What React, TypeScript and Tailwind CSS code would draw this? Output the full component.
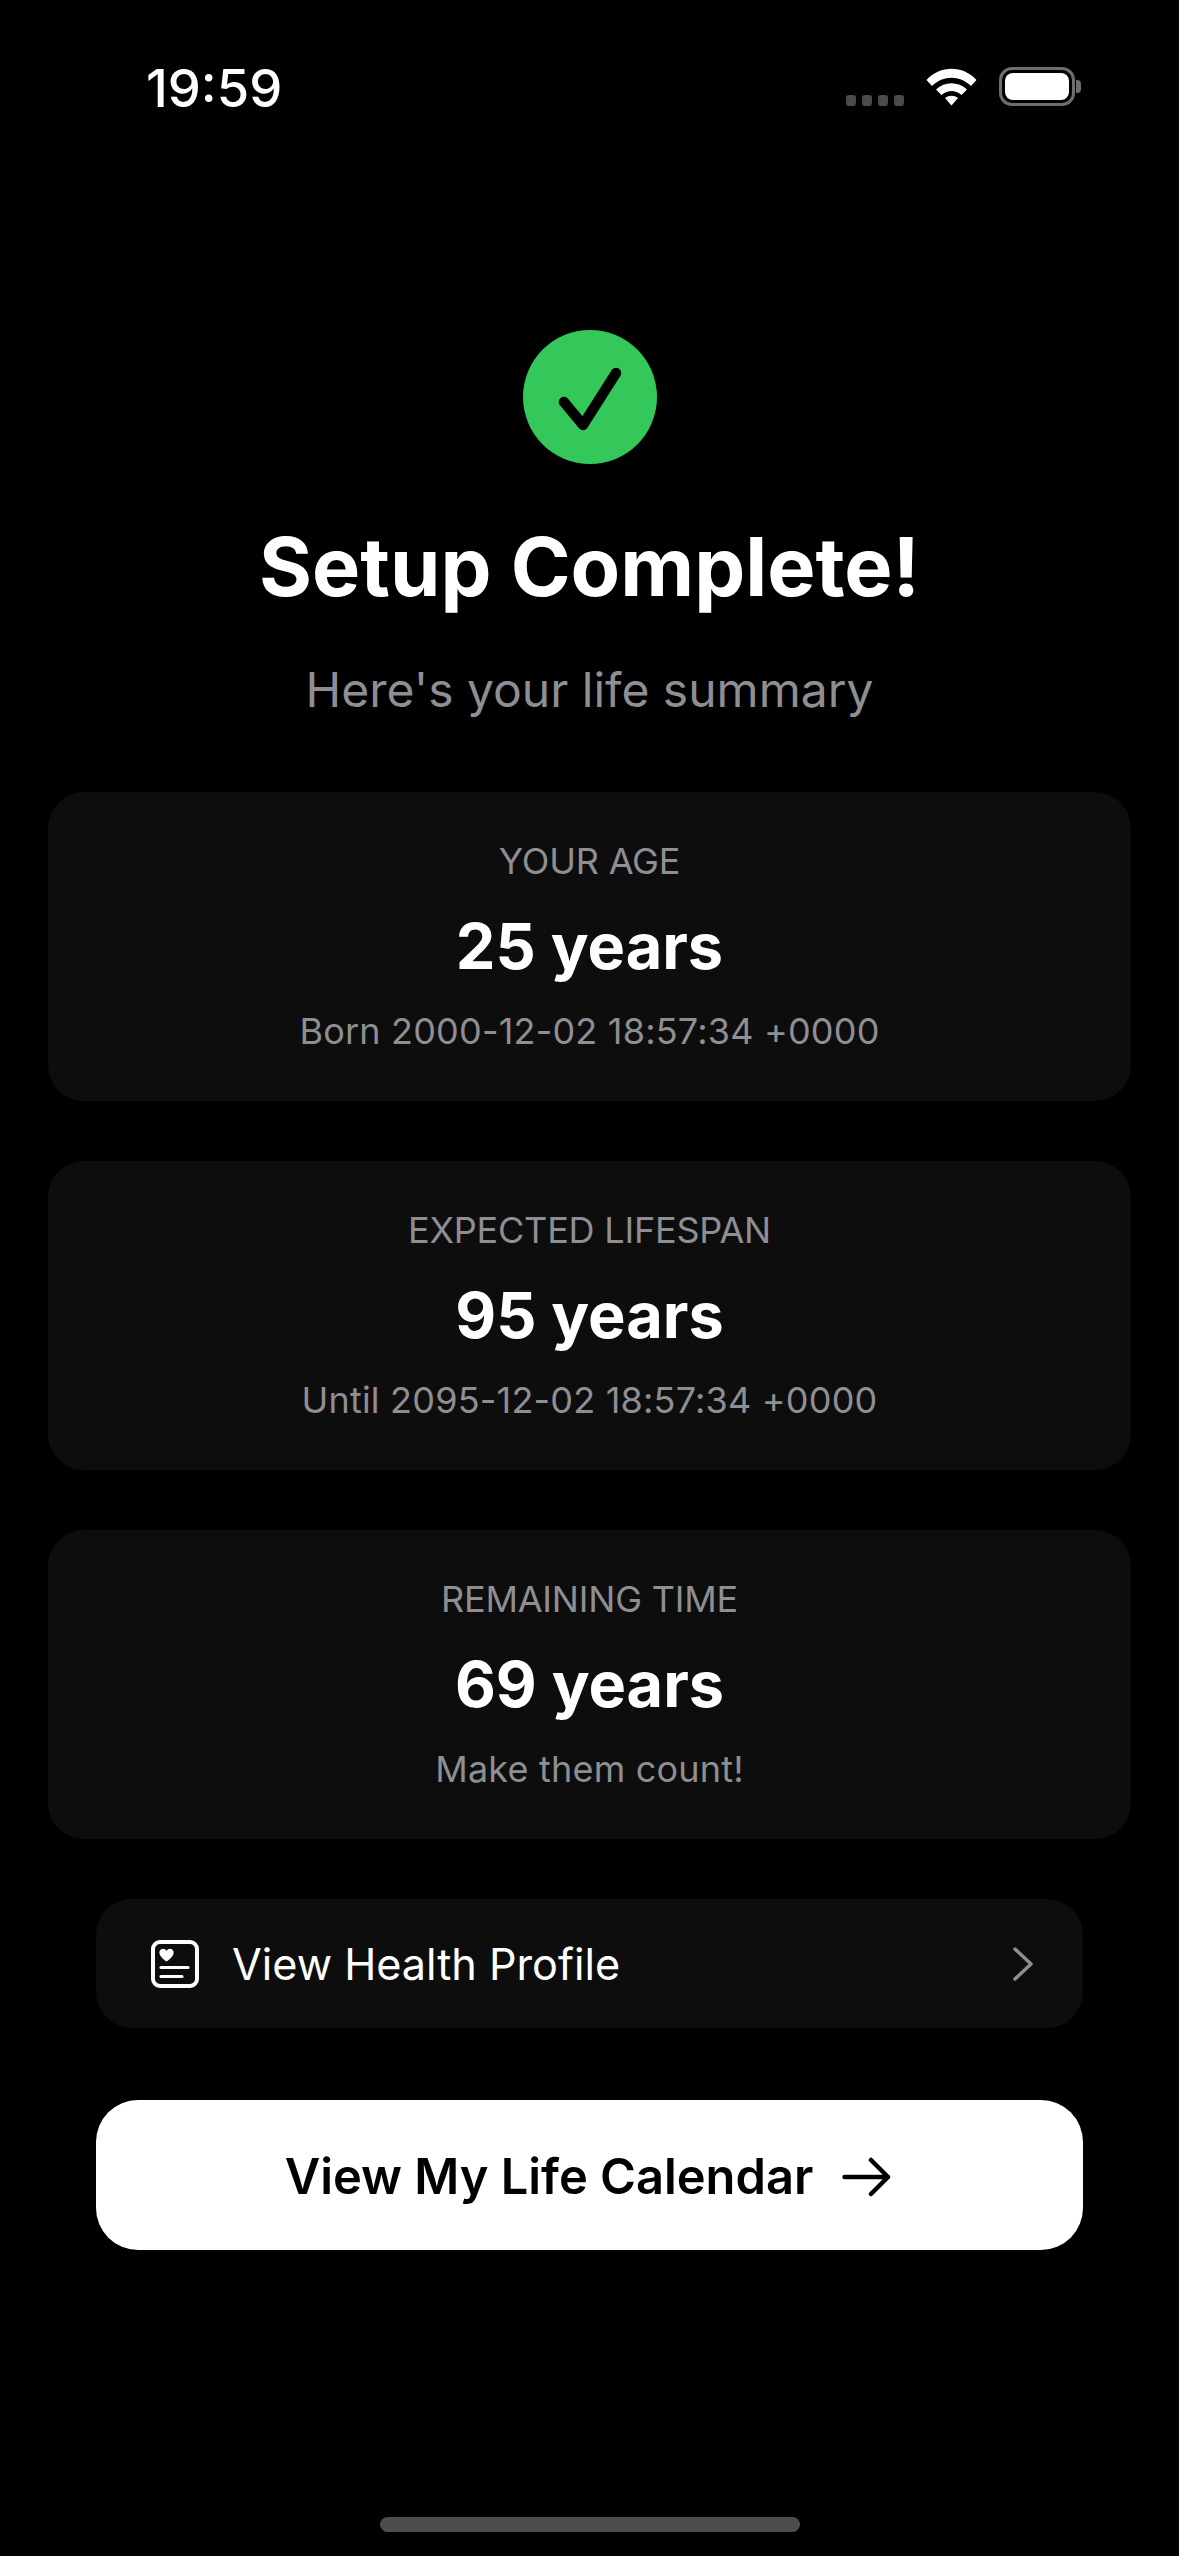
import React from "react";

function StatCard({ label, value, note }: { label: string; value: string; note: string }) {
  return (
    <div className="w-full h-[309px] rounded-[36px] bg-[#0d0d0d] flex flex-col items-center pt-[47px]">
      <div className="text-[36px] leading-[44px] text-[#8e8e93] tracking-[-0.2px]">{label}</div>
      <div className="text-[63px] leading-[80px] font-bold text-white mt-[23px]">{value}</div>
      <div className="text-[36px] leading-[44px] text-[#8e8e93] mt-[23px] tracking-[0.2px]">{note}</div>
    </div>
  );
}

export default function App() {
  return (
    <div className="w-[1179px] h-[2556px] bg-black flex flex-col items-center font-['Inter',sans-serif] overflow-hidden">
      {/* status bar */}
      <div className="w-full h-[330px] shrink-0 flex items-start justify-between pl-[146px] pr-[104px] pt-[58px]">
        <div className="text-[52.5px] leading-[60px] font-medium text-white">19:59</div>
        <div className="flex items-center pt-[9px]">
          <div className="flex gap-[6px] mt-[28px] mr-[22px]">
            <div className="w-[10px] h-[11px] rounded-[3px] bg-[#4a4a4a]" />
            <div className="w-[10px] h-[11px] rounded-[3px] bg-[#4a4a4a]" />
            <div className="w-[10px] h-[11px] rounded-[3px] bg-[#4a4a4a]" />
            <div className="w-[10px] h-[11px] rounded-[3px] bg-[#4a4a4a]" />
          </div>
          <svg width="51" height="38" viewBox="0 0 51 38" className="mr-[22px]">
            <path d="M0.5 12 C14 -3 37 -3 50.5 12 L45 18 C34 7 17 7 6 18 Z" fill="#fff" />
            <path d="M10 21.5 C19 13 32 13 41 21.5 L35.5 27 C29 21.5 22 21.5 15.5 27 Z" fill="#fff" />
            <path d="M19 30 C23 27 28 27 32 30 L25.5 37.5 Z" fill="#fff" />
          </svg>
          <div className="relative w-[76px] h-[39px] rounded-[13px] border-[3px] border-[#6e6e6e] p-[3px]">
            <div className="w-full h-full rounded-[8px] bg-white" />
            <div className="absolute right-[-9px] top-[10px] w-[5px] h-[13px] rounded-r-[4px] bg-[#6e6e6e]" />
          </div>
        </div>
      </div>

      {/* check */}
      <div className="w-[134px] h-[134px] rounded-full bg-[#34c759] flex items-center justify-center shrink-0">
        <svg width="134" height="134" viewBox="0 0 134 134" fill="none">
          <path d="M41 72 L60 95 L93 43" stroke="#000" strokeWidth="10.5" strokeLinecap="round" strokeLinejoin="round" />
        </svg>
      </div>

      <h1 className="mt-[56px] text-[81px] leading-[94px] font-bold text-white">Setup Complete!</h1>
      <p className="mt-[47px] text-[48px] leading-[58px] text-[#8e8e93]">Here's your life summary</p>

      <div className="w-full px-[48px] mt-[73px] flex flex-col gap-[60px]">
        <StatCard label="YOUR AGE" value="25 years" note="Born 2000-12-02 18:57:34 +0000" />
        <StatCard label="EXPECTED LIFESPAN" value="95 years" note="Until 2095-12-02 18:57:34 +0000" />
        <StatCard label="REMAINING TIME" value="69 years" note="Make them count!" />
      </div>

      <div className="w-full px-[96px] mt-[60px] flex flex-col gap-[72px]">
        <div className="h-[129px] rounded-[36px] bg-[#0d0d0d] flex items-center pl-[54px] pr-[50px]">
          <svg width="50" height="50" viewBox="0 0 50 50" fill="none" className="shrink-0">
            <rect x="3" y="3" width="44" height="44" rx="7" stroke="#fff" strokeWidth="4" />
            <path d="M16.5 22.5 C10 18 9 15 9.5 12.5 C10.5 9 15 9 16.5 12 C18 9 22.5 9 23.5 12.5 C24 15 23 18 16.5 22.5 Z" fill="#fff" />
            <path d="M11 28.5 H38 M11 37.5 H32" stroke="#fff" strokeWidth="3.2" strokeLinecap="round" />
          </svg>
          <span className="ml-[32px] text-[43.2px] leading-[54px] text-white flex-1">View Health Profile</span>
          <svg width="20" height="34" viewBox="0 0 20 34" fill="none" className="shrink-0">
            <path d="M2 2 L18 17 L2 32" stroke="#8e8e93" strokeWidth="3.5" strokeLinecap="round" strokeLinejoin="round" />
          </svg>
        </div>
        <div className="h-[150px] rounded-[42px] bg-white flex items-center justify-center gap-[29px] pt-[3px] pr-[2px]">
          <span className="text-[48.8px] leading-[60px] font-semibold text-black">View My Life Calendar</span>
          <svg width="50" height="40" viewBox="0 0 50 40" fill="none" className="shrink-0">
            <path d="M2.5 20 H46 M29 3 L46 20 L29 37" stroke="#000" strokeWidth="4.5" strokeLinecap="round" strokeLinejoin="round" />
          </svg>
        </div>
      </div>

      <div className="mt-auto mb-[24px] w-[420px] h-[15px] rounded-full bg-[#4d4d4d] shrink-0" />
    </div>
  );
}
